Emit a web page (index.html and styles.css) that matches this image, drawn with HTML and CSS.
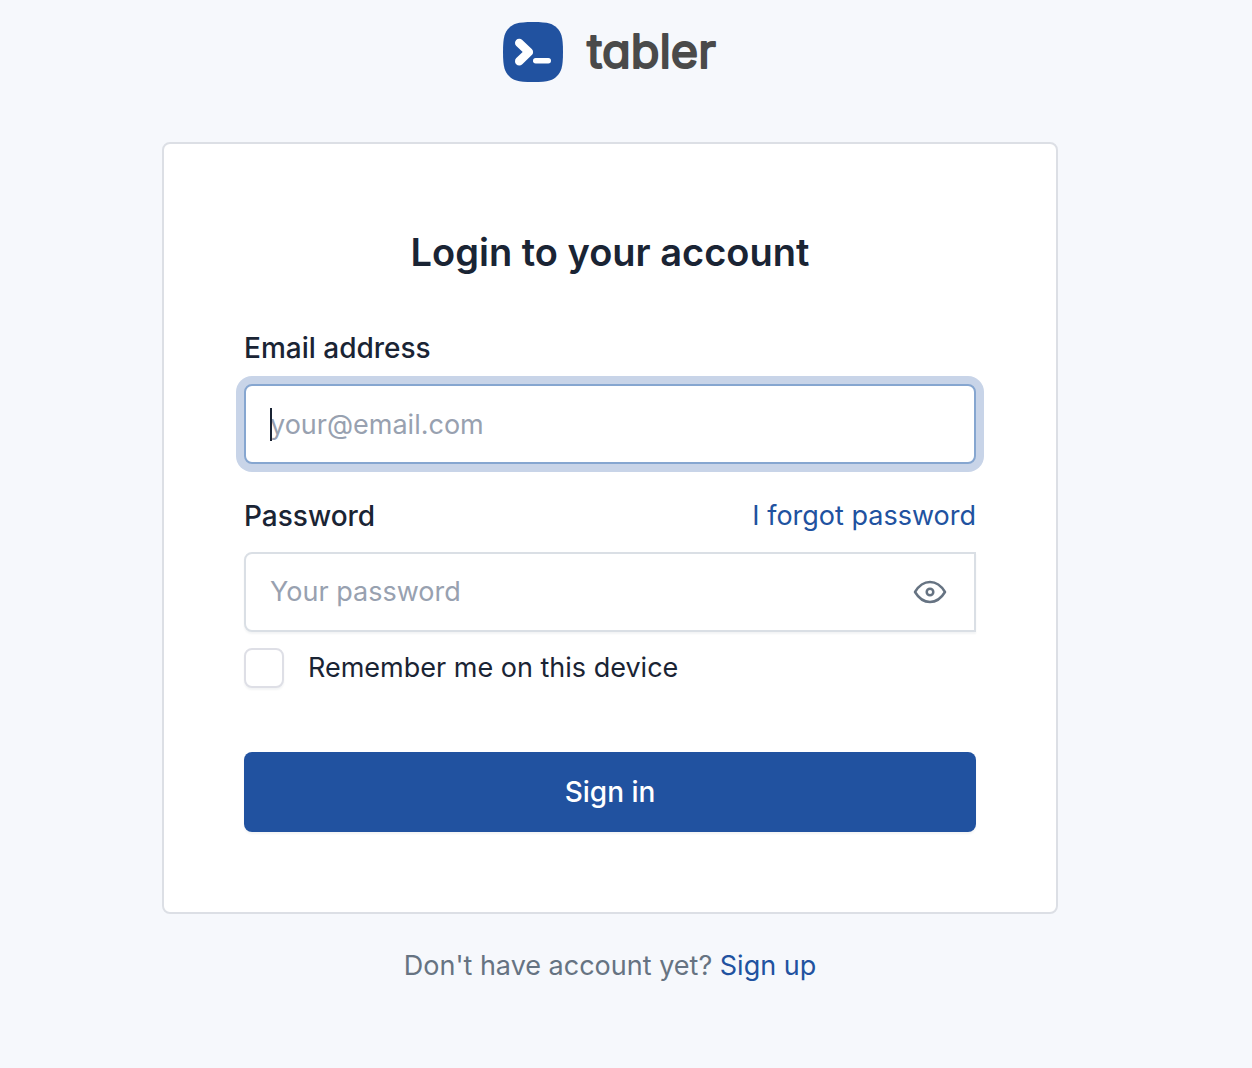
FILE: index.html
```html
<!DOCTYPE html>
<html lang="en">
<head>
  <meta charset="utf-8">
  <meta name="viewport" content="width=device-width, initial-scale=1">
  <title>Login to your account</title>
  <link rel="stylesheet" href="styles.css">
</head>
<body>
  <main class="page">
    <a class="brand" href="#" aria-label="tabler">
      <svg class="brand-mark" viewBox="0 0 60 60" aria-hidden="true">
        <path fill="#2152a0" d="M30 0C46 0 50 2 54 6C58 10 60 14 60 30S58 50 54 54C50 58 46 60 30 60S10 58 6 54C2 50 0 46 0 30S2 10 6 6C10 2 14 0 30 0Z"/>
        <path fill="none" stroke="#fff" stroke-width="8.600" stroke-linecap="round" stroke-linejoin="round" d="M16.300 21L25.800 30L16.300 39.200"/>
        <rect fill="#fff" x="30" y="36" width="18" height="5.400" rx="2.700"/>
      </svg>
      <svg class="brand-name" viewBox="0 0 130 60" aria-hidden="true">
        <text class="brand-text" x="0" y="46">tabler</text>
      </svg>
    </a>

    <section class="card">
      <h1 class="title">Login to your account</h1>
      <form class="form" autocomplete="off">
        <div class="field">
          <label class="label" for="email">Email address</label>
          <div class="control">
            <input class="input input-active" id="email" type="email" placeholder="your@email.com" autofocus>
            <span class="caret"></span>
          </div>
        </div>
        <div class="field">
          <div class="label-row">
            <label class="label" for="password">Password</label>
            <a class="link" href="#">I forgot password</a>
          </div>
          <div class="input input-group">
            <input class="bare-input" id="password" type="password" placeholder="Your password">
            <button class="reveal" type="button" aria-label="Show password">
              <svg class="eye" viewBox="0 0 40 40" aria-hidden="true">
                <circle cx="20" cy="20" r="3.300"/>
                <path d="M35 20Q29 30 20 30T5 20Q11 10 20 10T35 20Z"/>
              </svg>
            </button>
          </div>
        </div>
        <label class="check">
          <input class="checkbox" type="checkbox">
          <span>Remember me on this device</span>
        </label>
        <button class="submit" type="submit">Sign in</button>
      </form>
    </section>

    <p class="signup">Don't have account yet? <a class="link" href="#">Sign up</a></p>
  </main>
</body>
</html>
```
FILE: styles.css
```css
*, *::before, *::after {
  box-sizing: border-box;
}

body {
  margin: 0;
  background: #f6f8fc;
  color: #1a2434;
  font-family: Inter, "Liberation Sans", sans-serif;
  font-size: 27px;
  line-height: 40px;
  -webkit-font-smoothing: antialiased;
}

button, input {
  font: inherit;
  color: inherit;
}

.page {
  display: flex;
  flex-direction: column;
  align-items: center;
  padding: 22px 32px 64px 0;
}

.brand {
  display: flex;
  gap: 24px;
  margin-bottom: 60px;
}

.brand-mark {
  width: 60px;
  height: 60px;
}

.brand-name {
  width: 130px;
  height: 60px;
  overflow: visible;
}

.brand-text {
  font-size: 47px;
  font-weight: 400;
  font-feature-settings: "cv11";
  fill: #4a4a4a;
  stroke: #4a4a4a;
  stroke-width: 2;
  stroke-linejoin: round;
}

.card {
  width: 100%;
  max-width: 896px;
  padding: 80px;
  background: #fff;
  border: 2px solid #dcdfe5;
  border-radius: 8px;
}

.title {
  margin: 0 0 48px;
  font-size: 38px;
  font-weight: 600;
  line-height: 56px;
  text-align: center;
}

.form {
  display: flex;
  flex-direction: column;
}

.field {
  display: flex;
  flex-direction: column;
  gap: 16px;
  margin-bottom: 32px;
}

.field + .check {
  margin-top: -16px;
}

.label {
  font-size: 28px;
  font-weight: 500;
}

.label-row {
  display: flex;
  justify-content: space-between;
}

.link {
  color: #2152a0;
  text-decoration: none;
}

.control {
  position: relative;
}

.input {
  display: block;
  width: 100%;
  height: 80px;
  padding: 0 24px;
  background: #fff;
  border: 2px solid #dadfe5;
  border-radius: 8px;
  outline: none;
  box-shadow: 0 2px 2px rgba(26, 36, 52, 0.05);
}

.input-active {
  border-color: #86a6d0;
  box-shadow: 0 0 0 8px #c8d4e8;
  caret-color: transparent;
}

.input::placeholder,
.bare-input::placeholder {
  color: #98a1b0;
  opacity: 1;
}

.caret {
  position: absolute;
  top: 24px;
  left: 26px;
  width: 2px;
  height: 33px;
  background: #1a2434;
}

.input-group {
  display: flex;
  align-items: center;
  border-radius: 8px 0 0 8px;
}

.bare-input {
  flex: 1;
  min-width: 0;
  padding: 0;
  background: none;
  border: 0;
  outline: none;
}

.reveal {
  padding: 0;
  background: none;
  border: 0;
  color: #667382;
}

.eye {
  display: block;
  width: 40px;
  height: 40px;
  fill: none;
  stroke: currentColor;
  stroke-width: 2.500px;
  stroke-linecap: round;
  stroke-linejoin: round;
}

.check {
  display: flex;
  align-items: center;
  gap: 24px;
  margin-bottom: 64px;
}

.checkbox {
  appearance: none;
  width: 40px;
  height: 40px;
  margin: 0;
  background: #fff;
  border: 2px solid #dedfe6;
  border-radius: 8px;
  box-shadow: 0 2px 2px rgba(26, 36, 52, 0.05);
}

.checkbox:checked {
  background: #2152a0;
}

.submit {
  height: 80px;
  background: #2152a0;
  border: 0;
  border-radius: 8px;
  box-shadow: 0 2px 2px rgba(26, 36, 52, 0.05);
  color: #fff;
  font-size: 28px;
  font-weight: 500;
}

.signup {
  margin: 32px 0 0;
  color: #667382;
}
```
